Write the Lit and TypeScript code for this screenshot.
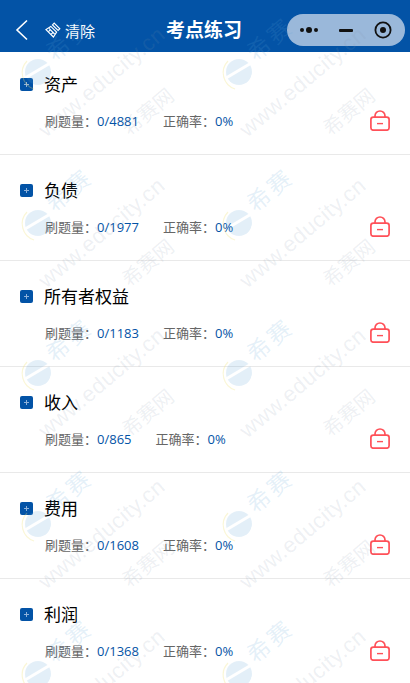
import { LitElement, css, html, svg } from "lit";
import { customElement } from "lit/decorators.js";

const ROWS = [
  { name: "资产", total: 4881 },
  { name: "负债", total: 1977 },
  { name: "所有者权益", total: 1183 },
  { name: "收入", total: 865 },
  { name: "费用", total: 1608 },
  { name: "利润", total: 1368 },
];

const lockIcon = svg`
  <svg class="lock" viewBox="0 0 20 21" width="20" height="21" fill="none" stroke="#ff5058" stroke-width="1.7">
    <path d="M5 7.5V6a5 5 0 0 1 10 0v1.5" />
    <rect x="0.9" y="7.2" width="18.2" height="13" rx="2.4" />
    <path d="M7 13.6h6" stroke-width="1.4" />
  </svg>`;

const broomIcon = svg`
  <svg viewBox="0 0 16 16" width="16" height="16" fill="none" stroke="#fff" stroke-width="1.2">
    <path d="M9.2 1.2l5.6 5.6-1.7 1.7-5.6-5.6z" />
    <path d="M5.8 4.4L1 7.6l7.4 7.4 3.2-4.8z" />
    <path d="M4 6.4l5.6 5.6M3.4 9.6l1.6-1.4M6 12.4l1.6-1.6" />
  </svg>`;

@customElement("app-root")
export class AppRoot extends LitElement {
  static styles = css`
    :host {
      display: block;
      position: relative;
      width: 410px;
      height: 683px;
      overflow: hidden;
      background: #fff;
      font-family: "Open Sans", "Noto Sans CJK SC", sans-serif;
    }

    .header {
      height: 52px;
      box-sizing: border-box;
      padding-top: 8px;
      display: flex;
      align-items: center;
      position: relative;
      background: #0353a6;
      color: #fff;
    }

    .back {
      margin-left: 15px;
      display: flex;
    }

    .clear {
      margin-left: 17px;
      display: flex;
      align-items: center;
      gap: 4px;
      font-size: 15px;
    }

    .title {
      position: absolute;
      left: 0;
      right: 2px;
      top: 0;
      line-height: 60px;
      height: 52px;
      text-align: center;
      font-size: 19px;
      font-weight: 700;
    }

    .capsule {
      position: absolute;
      left: 287px;
      top: 14px;
      width: 118px;
      height: 32px;
      border-radius: 16px;
      background: #9ab8da;
      display: grid;
      grid-template-columns: 44px 29px 45px;
      align-items: center;
      justify-items: center;
    }

    .capsule > svg {
      display: block;
    }

    .list {
      margin-top: -3px;
    }

    .row {
      height: 106px;
      box-sizing: border-box;
      border-bottom: 1px solid #e9e9e9;
      padding: 23px 20px 0;
      display: flex;
      flex-direction: column;
    }

    .row-title {
      display: flex;
      align-items: center;
      height: 24px;
      font-size: 17px;
      color: #000;
    }

    .row-title .name {
      padding-bottom: 2px;
    }

    .plus {
      width: 13px;
      height: 13px;
      margin-right: 11px;
      border-radius: 2px;
      background: #0353a6;
      display: flex;
      align-items: center;
      justify-content: center;
    }

    .stats {
      margin-top: 14px;
      padding-left: 25px;
      display: flex;
      align-items: center;
      height: 22px;
      font-size: 13px;
      color: #666;
      position: relative;
    }

    .stats span {
      padding-bottom: 2px;
    }

    .stats b {
      font-weight: 400;
      color: #0353a6;
    }

    .stats .rate {
      margin-left: 24px;
    }

    .lock {
      position: absolute;
      right: 0;
      top: 0;
    }

    .marks {
      position: absolute;
      inset: 0;
      display: grid;
      grid-template-columns: repeat(2, 201px);
      grid-auto-rows: 150.5px;
      pointer-events: none;
    }

    .tile {
      position: relative;
    }

    .tile span {
      position: absolute;
      white-space: nowrap;
      line-height: 1;
      transform: translate(-50%, -50%) rotate(-40deg);
    }

    .tile svg {
      position: absolute;
      left: 18px;
      top: 52px;
    }

    .site {
      left: 102px;
      top: 82px;
      font-family: "Liberation Sans", sans-serif;
      font-size: 22px;
      letter-spacing: 0.5px;
      color: rgba(130, 150, 170, 0.14);
    }

    .mark-a {
      left: 69px;
      top: 39px;
      font-size: 23px;
      letter-spacing: 3px;
      color: rgba(90, 160, 215, 0.17);
    }

    .mark-b {
      left: 148px;
      top: 112px;
      font-size: 20px;
      color: rgba(130, 150, 170, 0.14);
    }
  `;

  private renderTile(index: number) {
    const maskId = `logo-cut-${index}`;
    return html`
      <div class="tile">
        <svg viewBox="0 0 40 40" width="40" height="40" fill="none">
          <mask id=${maskId}>
            <rect width="40" height="40" fill="#fff" />
            <path d="M7 26L34 10" stroke="#000" stroke-width="3" />
            <path d="M24 34a13 13 0 0 0 10-11" stroke="#000" stroke-width="3" />
          </mask>
          <path d="M9 9a17 17 0 0 0 7 28" stroke="rgba(240,225,120,0.3)" stroke-width="1.2" />
          <circle cx="20" cy="20" r="13" fill="rgba(90,160,215,0.17)" mask="url(#${maskId})" />
        </svg>
        <span class="site">www.educity.cn</span>
        <span class="mark-a">希赛</span>
        <span class="mark-b">希赛网</span>
      </div>
    `;
  }

  render() {
    return html`
      <div class="header">
        <div class="back">
          <svg viewBox="0 0 13 22" width="13" height="22" fill="none" stroke="#fff" stroke-width="1.6">
            <path d="M12 1.5L2 11l10 9.5" />
          </svg>
        </div>
        <div class="clear">${broomIcon}<span>清除</span></div>
        <div class="title">考点练习</div>
        <div class="capsule">
          <svg viewBox="0 0 20 8" width="20" height="8" fill="#111">
            <circle cx="3" cy="4" r="2" />
            <circle cx="10" cy="4" r="3" />
            <circle cx="17" cy="4" r="2" />
          </svg>
          <svg viewBox="0 0 14 3" width="14" height="3" fill="#111">
            <rect width="14" height="3" rx="1" />
          </svg>
          <svg viewBox="0 0 18 18" width="18" height="18" fill="none" stroke="#111" stroke-width="1.8">
            <circle cx="9" cy="9" r="7.6" />
            <circle cx="9" cy="9" r="3" fill="#111" stroke="none" />
          </svg>
        </div>
      </div>
      <div class="list">
        ${ROWS.map(
          (row) => html`
            <div class="row">
              <div class="row-title">
                <div class="plus">
                  <svg viewBox="0 0 5 5" width="5" height="5" stroke="#8fb2da" stroke-width="1">
                    <path d="M0 2.5h5M2.5 0v5" />
                  </svg>
                </div>
                <div class="name">${row.name}</div>
              </div>
              <div class="stats">
                <span>刷题量：<b>0/${row.total}</b></span>
                <span class="rate">正确率：<b>0%</b></span>
                ${lockIcon}
              </div>
            </div>
          `
        )}
      </div>
      <div class="marks">
        ${Array.from({ length: 10 }, (_, i) => this.renderTile(i))}
      </div>
    `;
  }
}
